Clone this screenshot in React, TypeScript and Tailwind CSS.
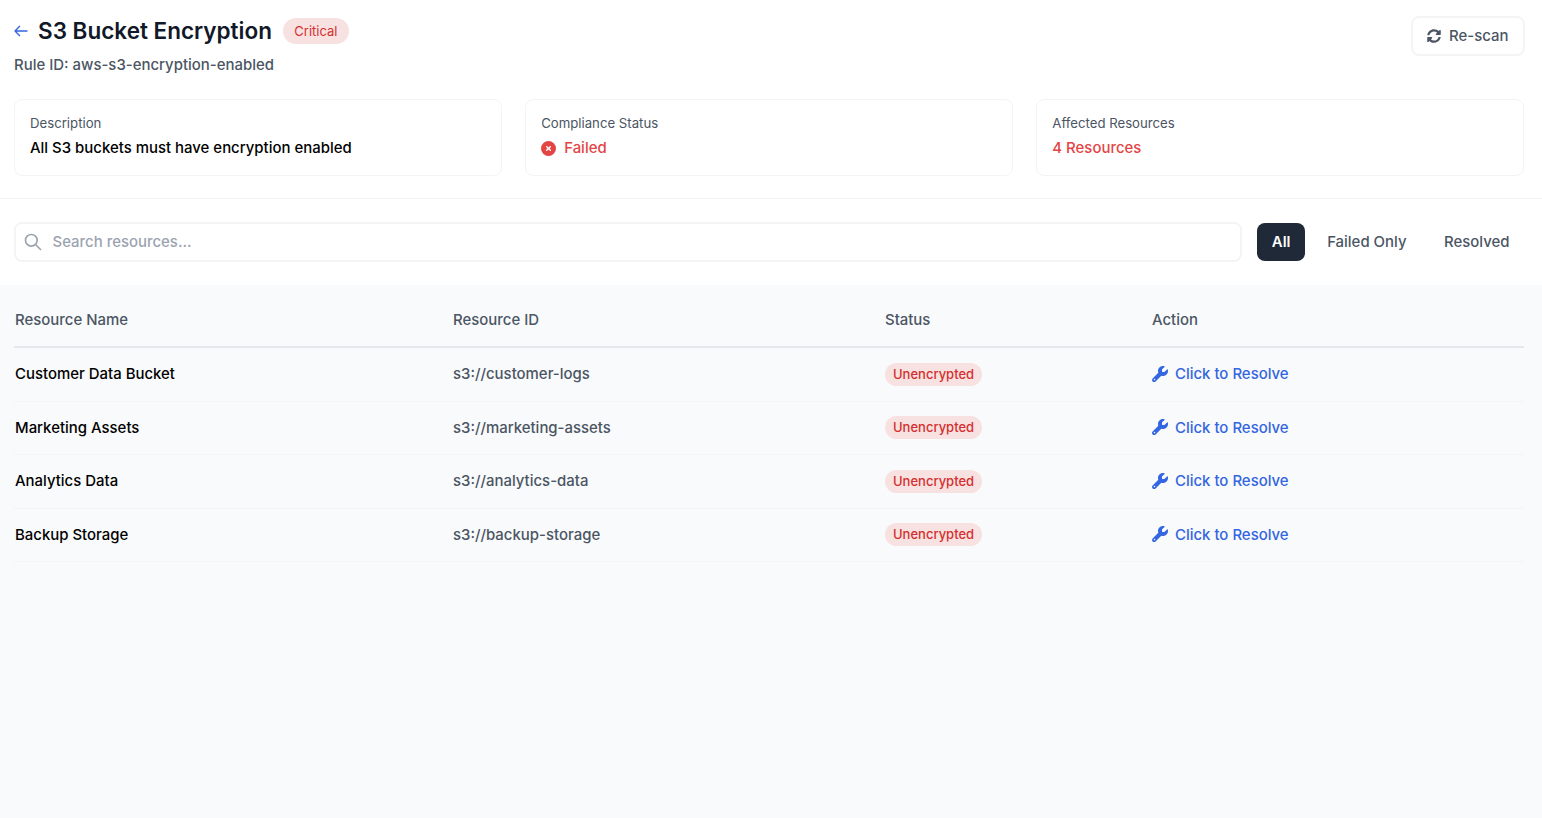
import React from "react";
import { HiOutlineArrowLeft, HiOutlineSearch } from "react-icons/hi";
import { FaSyncAlt } from "react-icons/fa";
import { FaCircleXmark, FaWrench } from "react-icons/fa6";

const rows = [
  ["Customer Data Bucket", "s3://customer-logs"],
  ["Marketing Assets", "s3://marketing-assets"],
  ["Analytics Data", "s3://analytics-data"],
  ["Backup Storage", "s3://backup-storage"],
];

const cols = "grid grid-cols-[438px_432px_267px_1fr] items-center pl-px";

function Card({ label, children }: { label: string; children: React.ReactNode }) {
  return (
    <div className="h-[77px] rounded-lg border border-[#f3f4f6] bg-white px-[15px] pt-[14px]">
      <div className="text-[13.2px] leading-[18px] text-[#4b5563]">{label}</div>
      <div className="mt-1 flex h-6 items-center text-[14.95px] font-medium">{children}</div>
    </div>
  );
}

export default function App() {
  return (
    <div className="flex min-h-[818px] flex-col bg-white font-['Inter',sans-serif]">
      <header className="h-[199px] border-b border-[#f3f4f6] pr-[17.5px] pl-[14px]">
        <div className="flex h-[99px] items-start justify-between">
          <div>
            <div className="mt-[18px] flex h-[26px] items-center">
              <HiOutlineArrowLeft className="-ml-[1.5px] h-4 w-4 text-[#3366e0]" />
              <h1 className="ml-[9.5px] text-[22.5px] leading-8 font-semibold text-[#111827]">S3 Bucket Encryption</h1>
              <span className="ml-[11px] flex h-[26px] w-[66px] items-center justify-center rounded-full bg-[#f8e2e1] pt-px text-[13px] text-[#d42f2f]">Critical</span>
            </div>
            <p className="mt-[9px] text-[14.95px] leading-[24px] font-medium text-[#4b5563]">Rule ID: aws-s3-encryption-enabled</p>
          </div>
          <button className="mt-4 flex h-10 w-[113.5px] items-center justify-center gap-2 rounded-lg border-2 border-[#f3f4f6] text-[14.95px] font-medium text-[#4b5563]">
            <FaSyncAlt className="h-[14px] w-[14px]" />
            Re-scan
          </button>
        </div>
        <div className="grid grid-cols-3 gap-[23px]">
          <Card label="Description">
            <span className="text-black">All S3 buckets must have encryption enabled</span>
          </Card>
          <Card label="Compliance Status">
            <FaCircleXmark className="h-[15px] w-[15px] text-[#e34545]" />
            <span className="ml-2 text-[#e34545]">Failed</span>
          </Card>
          <Card label="Affected Resources">
            <span className="text-[#e34545]">4 Resources</span>
          </Card>
        </div>
      </header>

      <div className="flex h-[86px] items-center pr-[17px] pl-[14px]">
        <div className="flex h-10 flex-1 items-center rounded-lg border-2 border-[#f3f4f6] pl-[7px]">
          <HiOutlineSearch className="h-5 w-5 text-[#9ca3af]" />
          <span className="ml-[9.5px] text-[14.95px] font-medium text-[#9ca3af]">Search resources...</span>
        </div>
        <div className="ml-[15px] flex items-center">
          <button className="flex h-[38px] w-12 items-center justify-center rounded-lg bg-[#1f2937] text-[14.95px] font-semibold text-white">All</button>
          <button className="ml-[22px] text-[14.95px] font-medium text-[#4b5563]">Failed Only</button>
          <button className="mr-[15.5px] ml-[37.5px] text-[14.95px] font-medium text-[#4b5563]">Resolved</button>
        </div>
      </div>

      <main className="flex-1 bg-[#f9fafb] pr-[18px] pl-[14px]">
        <div className={`${cols} h-[63px] border-b-2 border-[#e5e7eb] pt-[10px] text-[14.95px] font-medium text-[#4b5563]`}>
          <div>Resource Name</div>
          <div>Resource ID</div>
          <div>Status</div>
          <div>Action</div>
        </div>
        {rows.map(([name, id]) => (
          <div key={id} className={`${cols} h-[53.5px] border-b border-[#f3f4f6] text-[14.95px] font-medium`}>
            <div className="text-black">{name}</div>
            <div className="text-[#4b5563]">{id}</div>
            <div className="flex items-center">
              <span className="flex h-[23px] items-center rounded-full bg-[#f8e2e1] px-2 text-[13px] text-[#d42f2f]">Unencrypted</span>
            </div>
            <div className="flex items-center text-[#3366e0]">
              <FaWrench className="-mt-px h-4 w-4" />
              <span className="ml-[7px]">Click to Resolve</span>
            </div>
          </div>
        ))}
      </main>
    </div>
  );
}
